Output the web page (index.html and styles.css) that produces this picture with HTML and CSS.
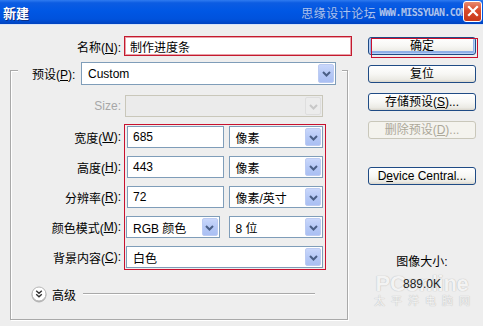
FILE: index.html
```html
<!DOCTYPE html>
<html lang="zh">
<head>
<meta charset="utf-8">
<title>新建</title>
<link rel="stylesheet" href="styles.css">
</head>
<body>
<div class="window">
  <div class="titlebar">
    <span class="title">新建</span>
    <span class="wm"><span class="wm-cn">思缘设计论坛</span><span class="wm-en">WWW.MISSYUAN.COM</span></span>
    <span class="close"><svg width="12" height="12" viewBox="0 0 12 12"><path d="M2 2 L10 10 M10 2 L2 10" stroke="#fff" stroke-width="2.2" stroke-linecap="square"/></svg></span>
  </div>
  <div class="body">
    <div class="main">
      <div class="name-row">
        <span class="name-lbl">名称(<u>N</u>):</span>
        <div class="input name-input">制作进度条</div>
      </div>
      <div class="group">
        <div class="preset-row">
          <span class="preset-lbl">预设(<u>P</u>):</span>
          <div class="select preset-select"><span class="sel-text">Custom</span><span class="arrow"><svg width="9" height="6" viewBox="0 0 9 6"><path d="M1 1 L4.5 4.5 L8 1" fill="none" stroke="#4a5f86" stroke-width="2"/></svg></span></div>
        </div>
        <div class="size-row">
          <span class="lbl dis">Size:</span>
          <div class="select sel-disabled wide"><span class="sel-text"></span><span class="arrow arrow-dis"><svg width="9" height="6" viewBox="0 0 9 6"><path d="M1 1 L4.5 4.5 L8 1" fill="none" stroke="#c8c8c8" stroke-width="2"/></svg></span></div>
        </div>
        <div class="fields-block">
          <div class="labels">
            <span class="lbl">宽度(<u>W</u>):</span>
            <span class="lbl">高度(<u>H</u>):</span>
            <span class="lbl">分辨率(<u>R</u>):</span>
            <span class="lbl">颜色模式(<u>M</u>):</span>
            <span class="lbl">背景内容(<u>C</u>):</span>
          </div>
          <div class="fields">
            <div class="frow">
              <div class="input num">685</div>
              <div class="select unit"><span class="sel-text">像素</span><span class="arrow"><svg width="9" height="6" viewBox="0 0 9 6"><path d="M1 1 L4.5 4.5 L8 1" fill="none" stroke="#4a5f86" stroke-width="2"/></svg></span></div>
            </div>
            <div class="frow">
              <div class="input num">443</div>
              <div class="select unit"><span class="sel-text">像素</span><span class="arrow"><svg width="9" height="6" viewBox="0 0 9 6"><path d="M1 1 L4.5 4.5 L8 1" fill="none" stroke="#4a5f86" stroke-width="2"/></svg></span></div>
            </div>
            <div class="frow">
              <div class="input num">72</div>
              <div class="select unit"><span class="sel-text">像素/英寸</span><span class="arrow"><svg width="9" height="6" viewBox="0 0 9 6"><path d="M1 1 L4.5 4.5 L8 1" fill="none" stroke="#4a5f86" stroke-width="2"/></svg></span></div>
            </div>
            <div class="frow">
              <div class="select mode"><span class="sel-text">RGB 颜色</span><span class="arrow"><svg width="9" height="6" viewBox="0 0 9 6"><path d="M1 1 L4.5 4.5 L8 1" fill="none" stroke="#4a5f86" stroke-width="2"/></svg></span></div>
              <div class="select unit"><span class="sel-text">8 位</span><span class="arrow"><svg width="9" height="6" viewBox="0 0 9 6"><path d="M1 1 L4.5 4.5 L8 1" fill="none" stroke="#4a5f86" stroke-width="2"/></svg></span></div>
            </div>
            <div class="frow">
              <div class="select wide"><span class="sel-text">白色</span><span class="arrow"><svg width="9" height="6" viewBox="0 0 9 6"><path d="M1 1 L4.5 4.5 L8 1" fill="none" stroke="#4a5f86" stroke-width="2"/></svg></span></div>
            </div>
          </div>
        </div>
        <div class="adv-row">
          <span class="adv-icon"><svg width="16" height="16" viewBox="0 0 16 16"><circle cx="8" cy="8" r="7" fill="#fff" stroke="#b4b4b4"/><path d="M5.2 4.8 L8 7.3 L10.8 4.8 M5.2 8.2 L8 10.7 L10.8 8.2" fill="none" stroke="#333" stroke-width="1.4"/></svg></span>
          <span class="adv-text">高级</span>
          <span class="adv-line"></span>
        </div>
      </div>
    </div>
    <div class="side">
      <div class="btn-wrap">
        <button class="btn btn-default">确定</button>
        <span class="mark"></span>
      </div>
      <button class="btn">复位</button>
      <button class="btn">存储预设(<u>S</u>)...</button>
      <button class="btn btn-dis">删除预设(<u>D</u>)...</button>
      <button class="btn btn-dc">D<u>e</u>vice Central...</button>
      <div class="imgsize">
        <div class="is-lbl">图像大小:</div>
        <div class="is-val">889.0K</div>
        <div class="pco"><span class="pco-en">PConline</span><span class="pco-cn">太平洋电脑网</span></div>
      </div>
    </div>
  </div>
</div>
</body>
</html>
```
FILE: styles.css
```css
html, body {
  margin: 0;
  padding: 0;
}
body {
  background: #eeeeee;
  font-family: "Liberation Sans", "Noto Sans CJK SC", sans-serif;
  font-size: 12px;
  color: #000;
}
.window {
  width: 483px;
  height: 326px;
  overflow: hidden;
  background: #eeeeee;
}
.titlebar {
  height: 24px;
  display: flex;
  align-items: center;
  background: linear-gradient(#2f7bf0 0%, #0c5ce2 12%, #0057e4 45%, #0052dc 80%, #0043bf 100%);
  border-bottom: 1px solid #d8e4f8;
}
.title {
  margin-left: 3px;
  color: #fff;
  font-weight: bold;
  font-size: 13px;
  font-family: "Noto Sans CJK SC", sans-serif;
  text-shadow: 1px 1px 0 #0a2f86;
}
.wm {
  margin-left: auto;
  display: flex;
  align-items: center;
  gap: 3px;
  color: #a9c4f4;
  text-shadow: 0 0 1px #1d46a8;
}
.wm-cn {
  font-family: "Noto Sans CJK SC", sans-serif;
  font-size: 12px;
  letter-spacing: 0.5px;
}
.wm-en {
  font-family: "DejaVu Sans Mono", monospace;
  font-weight: bold;
  font-size: 10px;
  letter-spacing: -0.6px;
}
.close {
  width: 17px;
  height: 19px;
  margin: 0 1px 2px -3px;
  border: 1px solid #fff;
  border-radius: 3px;
  background: linear-gradient(#e88a6f, #d9492b 45%, #c7381a);
  display: flex;
  align-items: center;
  justify-content: center;
}
.body {
  display: flex;
  padding-left: 10px;
}
.main {
  width: 338px;
  padding-top: 11px;
}
.name-row {
  display: flex;
  align-items: center;
  height: 20px;
}
.name-lbl {
  width: 111px;
  text-align: right;
  margin-right: 3px;
  flex: none;
}
.input {
  box-sizing: border-box;
  background: #fff;
  border: 1px solid #7f9db9;
  display: flex;
  align-items: center;
  padding-left: 5px;
  height: 22px;
}
.name-input {
  flex: none;
  width: 228px;
  height: 20px;
  border: 1px solid #c41a2e;
  box-shadow: inset 0 0 0 1px #e9a0a8;
}
.group {
  box-sizing: border-box;
  margin-top: 14px;
  height: 250px;
  border: 1px solid #a9a9a9;
  box-shadow: inset 1px 1px 0 #fff, 1px 1px 0 #fff;
}
.preset-row {
  display: flex;
  align-items: center;
  height: 23px;
  margin: -9px 5px 0 7px;
  padding: 0 6px 0 14px;
  background: #eeeeee;
}
.preset-lbl {
  width: 45px;
  margin-right: 4px;
}
.select {
  box-sizing: border-box;
  height: 22px;
  background: #fff;
  border: 1px solid #7f9db9;
  padding: 1px;
  display: flex;
}
.preset-select {
  flex: 1;
  height: 23px;
}
.sel-text {
  flex: 1;
  display: flex;
  align-items: center;
  padding-left: 5px;
  white-space: nowrap;
  overflow: hidden;
}
.arrow {
  box-sizing: border-box;
  width: 16px;
  flex: none;
  display: flex;
  align-items: center;
  justify-content: center;
  background: linear-gradient(#c9d7fb, #b6c9f6 50%, #aabff3);
  border: 1px solid #bccbf2;
  border-radius: 2px;
}
.arrow svg {
  margin-top: 1px;
}
.sel-disabled {
  background: #ebebeb;
  border-color: #c9c7ba;
}
.arrow-dis {
  background: #ececec;
  border-color: #dedede;
}
.size-row {
  display: flex;
  align-items: center;
  height: 22px;
  margin-top: 10px;
}
.lbl {
  width: 110px;
  flex: none;
  text-align: right;
  white-space: nowrap;
}
.size-row .lbl {
  margin-right: 4px;
}
.dis {
  color: #a7a7a7;
}
.wide {
  width: 198px;
}
.fields-block {
  display: flex;
  margin-top: 7px;
}
.labels {
  display: flex;
  flex-direction: column;
  gap: 8px;
  padding-top: 2px;
  margin-right: 3px;
}
.labels .lbl {
  height: 22px;
  display: flex;
  align-items: center;
  justify-content: flex-end;
}
.fields {
  box-sizing: border-box;
  width: 202px;
  border: 1px solid #c8102e;
  padding: 1px 2px 1px 1px;
  display: flex;
  flex-direction: column;
  gap: 8px;
}
.frow {
  display: flex;
  gap: 9px;
  height: 22px;
}
.num {
  width: 97px;
  margin-left: 1px;
  margin-right: -4px;
}
.unit {
  width: 95px;
}
.mode {
  width: 94px;
}
.adv-row {
  display: flex;
  align-items: center;
  height: 16px;
  margin-top: 16px;
  padding-left: 20px;
  margin-right: 32px;
}
.adv-icon {
  display: flex;
  width: 16px;
  height: 16px;
  filter: drop-shadow(0 1px 0.5px rgba(0,0,0,0.25));
}
.adv-text {
  margin-left: 5px;
}
.adv-line {
  flex: 1;
  margin-left: 7px;
  margin-bottom: 1px;
  height: 0;
  border-top: 1px solid #a9a9a9;
  border-bottom: 1px solid #fff;
}
.side {
  width: 108px;
  margin-left: 20px;
  padding-top: 12px;
  display: flex;
  flex-direction: column;
}
.btn-wrap {
  position: relative;
  margin-bottom: 10px;
}
.btn {
  box-sizing: border-box;
  width: 108px;
  height: 18px;
  margin: 0 0 10px 0;
  padding: 0;
  font: inherit;
  color: #000;
  border: 1px solid #1f4b85;
  border-radius: 3px;
  background: linear-gradient(#ffffff 0%, #f7f7f4 50%, #ebeae4 85%, #d9d6cc 100%);
  display: flex;
  align-items: center;
  justify-content: center;
  line-height: 1;
}
.btn-wrap .btn {
  margin: 0;
}
.btn-default {
  box-shadow: inset 0 0 0 1px #b8d0f6, inset 0 -1px 0 2px #8fb0e8;
}
.mark {
  position: absolute;
  left: 3px;
  top: 1px;
  width: 107px;
  height: 20px;
  box-sizing: border-box;
  border: 1px solid #c8102e;
}
.btn-dis {
  color: #aca899;
  border-color: #c9c7ba;
  background: #f4f3ee;
}
.btn-dc {
  margin-top: 18px;
}
.imgsize {
  position: relative;
  margin-top: 59px;
  text-align: center;
}
.is-lbl {
  line-height: 16px;
}
.is-val {
  margin-top: 6px;
  line-height: 16px;
  color: #222;
  position: relative;
  z-index: 1;
}
.pco {
  position: absolute;
  left: 4px;
  top: 20px;
  width: 100px;
  display: flex;
  flex-direction: column;
  align-items: center;
  color: #f3f3f3;
  text-shadow: 0 0 1px #bdbdbd, 0 0 1px #cacaca;
}
.pco-en {
  font-family: "Liberation Sans", sans-serif;
  font-weight: bold;
  font-size: 22px;
  line-height: 20px;
  letter-spacing: -0.3px;
}
.pco-cn {
  font-family: "Noto Sans CJK SC", sans-serif;
  font-size: 11px;
  line-height: 13px;
  letter-spacing: 6px;
  margin-right: -6px;
}
```
